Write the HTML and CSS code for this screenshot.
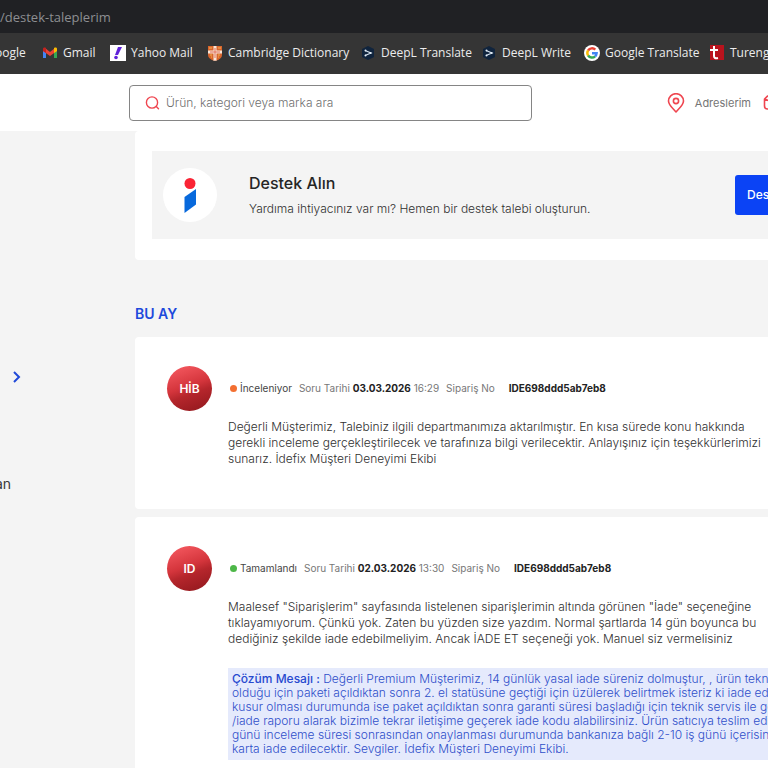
FILE: index.html
```html
<!DOCTYPE html>
<html lang="tr">
<head>
<meta charset="utf-8">
<meta name="viewport" content="width=device-width, initial-scale=1">
<title>destek-taleplerim</title>
<link rel="stylesheet" href="styles.css">
</head>
<body>
<div class="address">/destek-taleplerim</div>
<nav class="bookmarks">
  <a class="scrolled" href="#">oogle</a>
  <a href="#"><svg viewBox="0 0 16 16"><path fill="#4285f4" d="M1 4v9h3V7z"/><path fill="#34a853" d="M12 7v6h3V4z"/><path fill="#ea4335" d="M1 4l2-1 5 4 5-4 2 1v2L8 11 1 6z"/><path fill="#c5221f" d="M1 6V4c0-1 1-2 3-1v5z"/><path fill="#fbbc04" d="M12 3c2-1 3 0 3 1v2l-3 2z"/></svg>Gmail</a>
  <a href="#"><svg viewBox="0 0 16 16"><path fill="#fff" d="M0 0h16v16H0z"/><path fill="#5f22d9" d="M8 2h4L8 10H5z"/><circle cx="6" cy="12.500" r="1.800" fill="#5f22d9"/></svg>Yahoo Mail</a>
  <a href="#"><svg viewBox="0 0 16 16"><path fill="#d9652d" d="M1 1h14v9q0 4-7 6-7-2-7-6z"/><path fill="#f8e6d8" d="M6.500 1h3v4.500H15v3H9.500V16L8 15.500 6.500 16V8.500H1v-3h5.500z"/><path fill="#e2705a" d="M7.500 3h1v3.500H13v1H8.500V13h-1V7.500H3v-1h4.500z"/><path stroke="#f1b653" d="M2 3h3M11 3h3M3 10h2M11 10h2M4 12h1M11 12h1"/></svg>Cambridge Dictionary</a>
  <a href="#"><svg viewBox="0 0 16 16"><path fill="#10243d" d="M8 1l6 3v8l-6 3-6-3V4z"/><path fill="none" stroke="#d4e2f0" stroke-width="1.200" d="M5 5.500L11 8l-6 2.500"/><g fill="#e6eff8"><circle cx="5.500" cy="5.500" r="1"/><circle cx="10.500" cy="8" r="1"/><circle cx="5.500" cy="10.500" r="1"/></g></svg>DeepL Translate</a>
  <a href="#"><svg viewBox="0 0 16 16"><path fill="#10243d" d="M8 1l6 3v8l-6 3-6-3V4z"/><path fill="none" stroke="#d4e2f0" stroke-width="1.200" d="M5 5.500L11 8l-6 2.500"/><g fill="#e6eff8"><circle cx="5.500" cy="5.500" r="1"/><circle cx="10.500" cy="8" r="1"/><circle cx="5.500" cy="10.500" r="1"/></g></svg>DeepL Write</a>
  <a href="#"><svg viewBox="0 0 16 16"><circle cx="8" cy="8" r="8" fill="#fff"/><g fill="none" stroke-width="2.400"><path stroke="#ea4335" d="M4.100 5.500A4.600 4.600 0 0 1 11.300 4.700"/><path stroke="#fbbc04" d="M4.100 10.500a4.600 4.600 0 0 1 0-5"/><path stroke="#34a853" d="M4.100 10.500a4.600 4.600 0 0 0 7 .8"/><path stroke="#4285f4" d="M8 8.300h4.600a4.600 4.600 0 0 1-1.500 3"/></g></svg>Google Translate</a>
  <a href="#"><svg viewBox="0 0 16 16"><path fill="#b9131d" d="M1 0h14v15H1z"/><path fill="none" stroke="#fff" stroke-width="2" d="M5 1v10q0 3 4 2M1 5h8"/></svg>Tureng</a>
</nav>
<header class="top">
  <form class="search">
    <svg viewBox="0 0 16 16" fill="none" stroke="#ef4650" stroke-width="1.400" stroke-linecap="round"><circle cx="7" cy="7.500" r="5.600"/><path d="M11.300 11.500l2.200 2.300"/></svg>
    <input type="search" aria-label="Arama" placeholder="Ürün, kategori veya marka ara">
  </form>
  <div class="links">
    <a href="#"><svg viewBox="0 0 18 20" fill="none" stroke="#ef4650" stroke-width="1.600" stroke-linejoin="round"><path d="M9 19C6 15.500 1.500 12 1.500 8a7.500 7.300 0 0 1 15 0c0 4-4.500 7.500-7.500 11z"/><circle cx="9" cy="8" r="2.600"/></svg>Adreslerim</a>
    <a href="#" aria-label="Sepet"><svg viewBox="0 0 18 20" fill="none" stroke="#ef4650" stroke-width="1.600" stroke-linejoin="round"><path d="M1.500 6l3-3h9l3 3v7q0 3-3 3h-9q-3 0-3-3zM1.500 6l7.500 3 7.500-3M4.500 3L9 5"/></svg></a>
  </div>
</header>
<div class="layout">
  <aside class="side">
    <a href="#" aria-label="Aç"><svg class="chevron" viewBox="0 0 10 14" fill="none" stroke="#2049d8" stroke-width="2"><path d="M2 2l5 5-5 5"/></svg></a>
    <a class="scrolled" href="#">an</a>
  </aside>
  <main>
    <section class="support">
      <div class="banner">
        <svg class="logo" viewBox="0 0 54 54"><circle cx="27" cy="27" r="27" fill="#fff"/><circle cx="27" cy="15.500" r="5.500" fill="#fa2435"/><path fill="#0869dc" d="M21.500 29L33 21v15.500L21.500 45z"/></svg>
        <div class="intro">
          <h1>Destek Alın</h1>
          <p>Yardıma ihtiyacınız var mı? Hemen bir destek talebi oluşturun.</p>
        </div>
        <button type="button">Des</button>
      </div>
    </section>
    <h2>BU AY</h2>
    <article class="ticket">
      <div class="avatar">HİB</div>
      <div class="body">
        <div class="meta"><span class="status open">İnceleniyor</span><span>Soru Tarihi <b>03.03.2026</b> 16:29</span><span>Sipariş No</span><b class="order">IDE698ddd5ab7eb8</b></div>
        <p class="message">Değerli Müşterimiz, Talebiniz ilgili departmanımıza aktarılmıştır. En kısa sürede konu hakkında<br>gerekli inceleme gerçekleştirilecek ve tarafınıza bilgi verilecektir. Anlayışınız için teşekkürlerimizi<br>sunarız. İdefix Müşteri Deneyimi Ekibi</p>
      </div>
    </article>
    <article class="ticket">
      <div class="avatar">ID</div>
      <div class="body">
        <div class="meta"><span class="status done">Tamamlandı</span><span>Soru Tarihi <b>02.03.2026</b> 13:30</span><span>Sipariş No</span><b class="order">IDE698ddd5ab7eb8</b></div>
        <p class="message">Maalesef "Siparişlerim" sayfasında listelenen siparişlerimin altında görünen "İade" seçeneğine<br>tıklayamıyorum. Çünkü yok. Zaten bu yüzden size yazdım. Normal şartlarda 14 gün boyunca bu<br>dediğiniz şekilde iade edebilmeliyim. Ancak İADE ET seçeneği yok. Manuel siz vermelisiniz</p>
        <p class="answer"><b>Çözüm Mesajı :</b> Değerli Premium Müşterimiz, 14 günlük yasal iade süreniz dolmuştur, , ürün tekno<br>olduğu için paketi açıldıktan sonra 2. el statüsüne geçtiği için üzülerek belirtmek isteriz ki iade edi<br>kusur olması durumunda ise paket açıldıktan sonra garanti süresi başladığı için teknik servis ile gö<br>/iade raporu alarak bizimle tekrar iletişime geçerek iade kodu alabilirsiniz. Ürün satıcıya teslim edi<br>günü inceleme süresi sonrasından onaylanması durumunda bankanıza bağlı 2-10 iş günü içerisind<br>karta iade edilecektir. Sevgiler. İdefix Müşteri Deneyimi Ekibi.</p>
      </div>
    </article>
  </main>
</div>
</body>
</html>
```
FILE: styles.css
```css
* { box-sizing: border-box; }
body {
  margin: 0;
  height: 100vh;
  overflow: hidden;
  background: #f4f4f4;
  color: #303030;
  font: 300 12px/16px Inter, "Liberation Sans", sans-serif;
  white-space: nowrap;
}
a { color: inherit; text-decoration: none; }
h1, h2, p { margin: 0; }

.address {
  height: 33px;
  background: #202124;
  color: #8d8f92;
  font: 13px/34px "Open Sans", "Noto Sans", sans-serif;
}
.bookmarks {
  display: grid;
  grid-template-columns: 42px 68px 97px 153px 121px 103px 125px 1fr;
  align-items: center;
  height: 41px;
  padding-bottom: 1px;
  background: #353535;
  color: #ececec;
  font: 12px/16px "Open Sans", "Noto Sans", sans-serif;
}
.bookmarks a { display: flex; align-items: center; gap: 5px; }
.bookmarks svg { width: 16px; height: 16px; flex: none; }
.bookmarks .scrolled, .side .scrolled { margin-left: -5px; }

.top {
  display: flex;
  align-items: center;
  justify-content: space-between;
  height: 57px;
  padding-left: 129px;
  background: #fff;
}
.search {
  display: flex;
  align-items: center;
  gap: 5px;
  flex: 0 1 403px;
  height: 36px;
  padding: 0 15px;
  border: 1px solid #858585;
  border-radius: 4px;
}
.search svg { width: 16px; height: 16px; flex: none; }
.search input {
  flex: 1;
  min-width: 0;
  padding: 0;
  border: 0;
  outline: 0;
  background: none;
  font: 300 12px/16px Inter, sans-serif;
}
.search input::placeholder { color: #707070; opacity: 1; }
.links { display: flex; gap: 12px; margin-right: -13px; color: #757575; font-size: 11px; font-weight: 400; }
.links a { display: flex; align-items: center; gap: 10px; }
.links svg { width: 18px; height: 20px; }

.layout { display: grid; grid-template-columns: 135px minmax(0, 1fr); }
.side {
  display: flex;
  flex-direction: column;
  gap: 91px;
  padding-top: 238px;
  color: #3a3a3a;
  font-size: 14px;
  font-weight: 400;
}
.side a { height: 16px; }
.chevron { display: block; width: 10px; height: 14px; margin: 1px 0 0 12px; }

.support { padding: 20px 0 21px 17px; background: #fff; border-radius: 4px 0 0 4px; }
.banner {
  display: flex;
  align-items: center;
  height: 88px;
  padding-left: 11px;
  background: #f4f4f4;
}
.logo { width: 54px; height: 54px; flex: none; }
.intro { flex: 1; margin-left: 32px; }
h1 { margin-bottom: 8px; color: #252525; font-size: 16px; line-height: 20px; font-weight: 500; }
.banner button {
  width: 33px;
  height: 40px;
  padding: 0 0 0 12px;
  border: 0;
  border-radius: 3px 0 0 3px;
  background: #0b43f5;
  color: #fff;
  font: 500 12px/16px Inter, sans-serif;
  text-align: left;
}
h2 { padding: 45px 0 14px; color: #1d49dc; font-size: 14px; line-height: 18px; font-weight: 600; }

.ticket {
  display: flex;
  gap: 16px;
  margin-bottom: 8px;
  padding: 29px 0 42px 32px;
  border-radius: 4px 0 0 4px;
  background: #fff;
}
.avatar {
  width: 45px;
  height: 45px;
  flex: none;
  border-radius: 50%;
  background: linear-gradient(160deg, #f55960 5%, #d4353c 45%, #b5262c 60%, #8f171c);
  color: #fff;
  font-size: 12px;
  font-weight: 600;
  line-height: 45px;
  text-align: center;
}
.body { min-width: 0; }
.meta {
  display: flex;
  gap: 7px;
  margin: 14px 0 23px 2px;
  color: #777;
  font-size: 10px;
  font-weight: 400;
}
.meta b { color: #222; font-weight: 700; }
.status { display: flex; align-items: center; gap: 3px; color: #454545; }
.status::before { content: ""; width: 7px; height: 7px; border-radius: 50%; }
.open::before { background: #f36f31; }
.done::before { background: #4db748; }
.meta .order { margin-left: 7px; }
.answer {
  margin-top: 21px;
  padding: 4px;
  background: #e5eafc;
  color: #2f4fca;
  line-height: 14px;
}
.answer b { color: #2749cf; font-weight: 500; }
```
